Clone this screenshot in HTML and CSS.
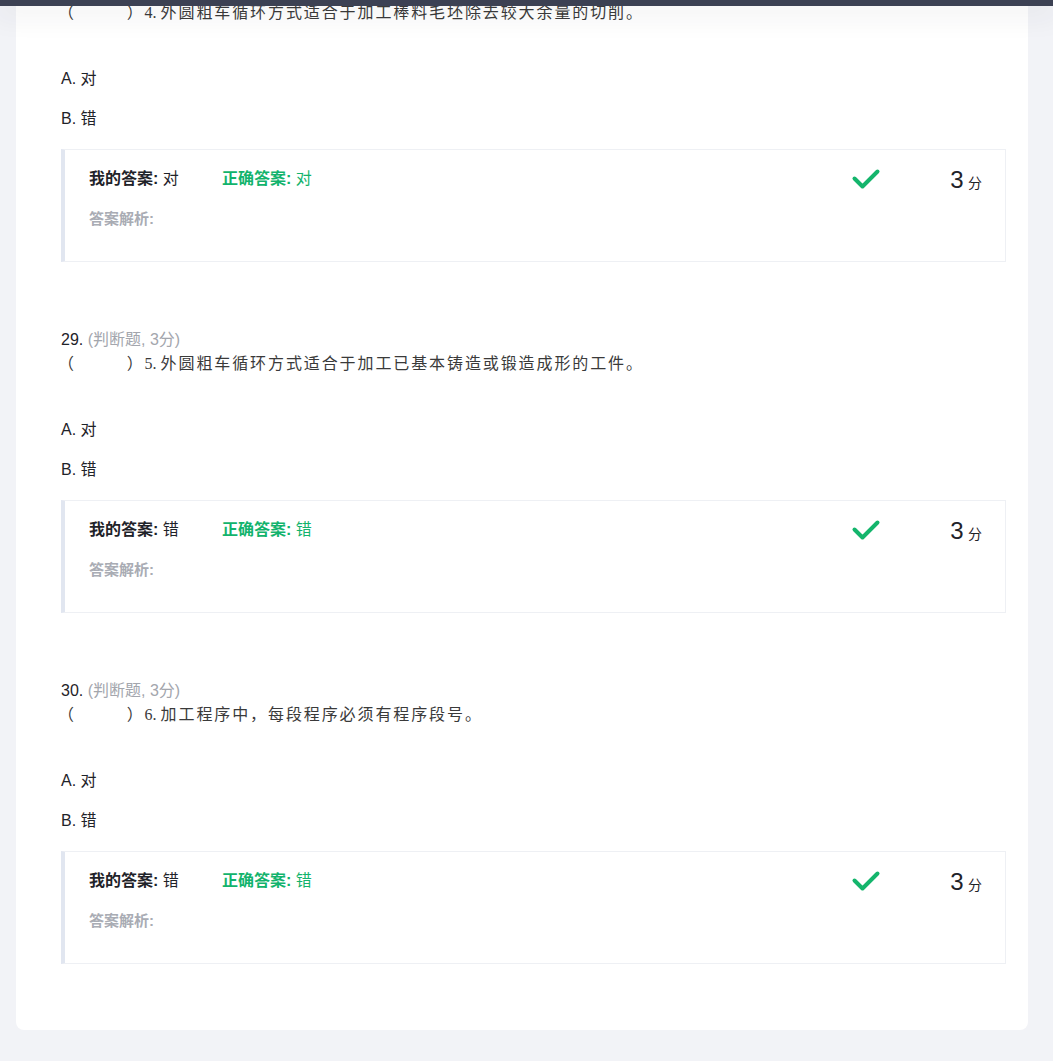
FILE: index.html
```html
<!DOCTYPE html>
<html lang="zh-CN">
<head>
<meta charset="utf-8">
<title>判断题</title>
<link rel="stylesheet" href="styles.css">
</head>
<body>
<div class="topbar"></div>
<main class="page">
  <section class="card">
    <div class="question first">
      <p class="q-text">（&emsp;&emsp;&ensp;&thinsp;）<span class="q-no">4. </span>外圆粗车循环方式适合于加工棒料毛坯除去较大余量的切削。</p>
      <ul class="options">
        <li>A. 对</li>
        <li>B. 错</li>
      </ul>
      <div class="answer">
        <div class="answer-row">
          <div class="answers">
            <span class="mine"><b>我的答案:</b> 对</span>
            <span class="right"><b>正确答案:</b> 对</span>
          </div>
          <div class="result">
            <svg class="check" viewBox="0 0 30 22" width="30" height="22"><path d="M3.5 10.5 L11.5 18.5 L26.5 3.5"/></svg>
            <span class="score"><span class="score-num">3</span> <span class="score-unit">分</span></span>
          </div>
        </div>
        <div class="analysis">答案解析:</div>
      </div>
    </div>

    <div class="question">
      <div class="q-head"><span class="num">29.</span> <span class="type">(判断题, 3分)</span></div>
      <p class="q-text">（&emsp;&emsp;&ensp;&thinsp;）<span class="q-no">5. </span>外圆粗车循环方式适合于加工已基本铸造或锻造成形的工件。</p>
      <ul class="options">
        <li>A. 对</li>
        <li>B. 错</li>
      </ul>
      <div class="answer">
        <div class="answer-row">
          <div class="answers">
            <span class="mine"><b>我的答案:</b> 错</span>
            <span class="right"><b>正确答案:</b> 错</span>
          </div>
          <div class="result">
            <svg class="check" viewBox="0 0 30 22" width="30" height="22"><path d="M3.5 10.5 L11.5 18.5 L26.5 3.5"/></svg>
            <span class="score"><span class="score-num">3</span> <span class="score-unit">分</span></span>
          </div>
        </div>
        <div class="analysis">答案解析:</div>
      </div>
    </div>

    <div class="question">
      <div class="q-head"><span class="num">30.</span> <span class="type">(判断题, 3分)</span></div>
      <p class="q-text">（&emsp;&emsp;&ensp;&thinsp;）<span class="q-no">6. </span>加工程序中，每段程序必须有程序段号。</p>
      <ul class="options">
        <li>A. 对</li>
        <li>B. 错</li>
      </ul>
      <div class="answer">
        <div class="answer-row">
          <div class="answers">
            <span class="mine"><b>我的答案:</b> 错</span>
            <span class="right"><b>正确答案:</b> 错</span>
          </div>
          <div class="result">
            <svg class="check" viewBox="0 0 30 22" width="30" height="22"><path d="M3.5 10.5 L11.5 18.5 L26.5 3.5"/></svg>
            <span class="score"><span class="score-num">3</span> <span class="score-unit">分</span></span>
          </div>
        </div>
        <div class="analysis">答案解析:</div>
      </div>
    </div>
  </section>
</main>
</body>
</html>
```

FILE: styles.css
```css
* { box-sizing: border-box; }

html, body {
  margin: 0;
  padding: 0;
  background: #f2f3f7;
}

body {
  font-family: "Liberation Sans", "Noto Sans CJK SC", sans-serif;
  font-size: 16px;
  color: #1f2329;
}

.topbar {
  position: fixed;
  top: 0;
  left: 0;
  right: 0;
  height: 6px;
  background: #3c4153;
  box-shadow: 0 4px 28px 6px rgba(40, 44, 60, 0.07);
  z-index: 10;
}

.page {
  padding: 0 25px 31px 16px;
}

.card {
  width: 1012px;
  background: #ffffff;
  border-radius: 0 0 8px 8px;
  padding: 1px 22px 66px 45px;
}

.question + .question {
  margin-top: 66px;
}

.q-head {
  line-height: 24px;
  height: 24px;
  font-size: 16px;
}

.q-head .num {
  color: #1f2329;
}

.q-head .type {
  color: #a3a6ad;
}

.q-text {
  margin: 0;
  font-family: "Liberation Serif", "Noto Sans CJK SC", serif;
  font-size: 16px;
  letter-spacing: 1.9px;
  line-height: 24px;
  height: 24px;
  color: #3a3a3a;
  white-space: nowrap;
  margin-left: -3px;
}

.q-no {
  letter-spacing: 0;
}

.options {
  list-style: none;
  margin: 42px 0 0 0;
  padding: 0;
  display: flex;
  flex-direction: column;
  gap: 16px;
}

.options li {
  line-height: 24px;
  height: 24px;
  font-size: 16px;
  color: #1f2329;
}

.answer {
  margin-top: 18px;
  width: 945px;
  border: 1px solid #eef0f4;
  border-left: 4px solid #e1e6f0;
  padding: 17px 23px 32px 24px;
  display: flex;
  flex-direction: column;
  gap: 18px;
}

.answer-row {
  display: flex;
  align-items: center;
  justify-content: space-between;
  height: 24px;
}

.answers {
  display: flex;
  align-items: center;
  line-height: 24px;
}

.answers b {
  font-weight: 700;
}

.mine {
  width: 133px;
  color: #1f2329;
}

.right {
  color: #12b36c;
}

.result {
  display: flex;
  align-items: center;
}

.check {
  display: block;
  margin-right: 69px;
}

.check path {
  fill: none;
  stroke: #14b56c;
  stroke-width: 4;
  stroke-linecap: round;
  stroke-linejoin: round;
}

.score {
  line-height: 24px;
  color: #1f2329;
  white-space: nowrap;
  padding-top: 4px;
}

.score-num {
  font-size: 24px;
}

.score-unit {
  font-size: 14px;
}

.analysis {
  line-height: 20px;
  height: 20px;
  font-size: 15px;
  font-weight: 700;
  color: #a9acb4;
}
```
